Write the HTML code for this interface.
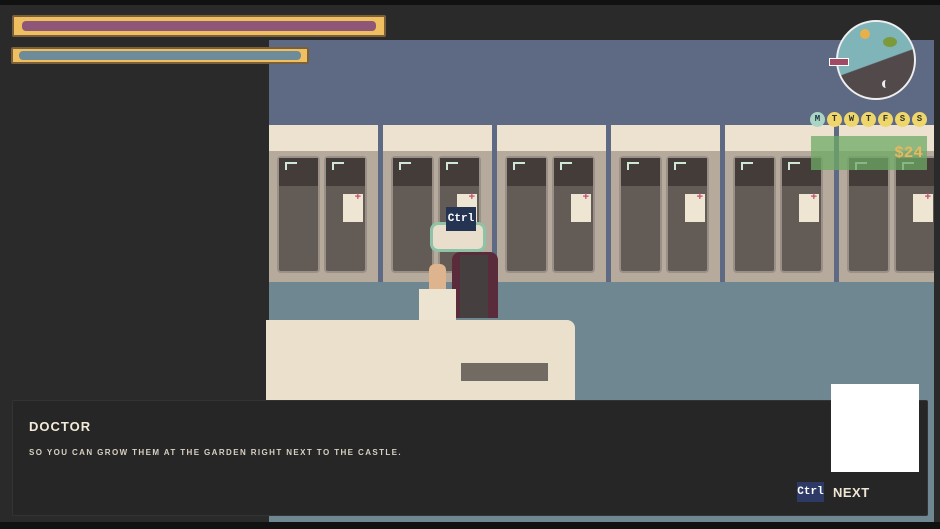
<!DOCTYPE html>
<html><head><style>
*{margin:0;padding:0;box-sizing:border-box}
body{width:940px;height:529px;background:#2b2a2b;position:relative;overflow:hidden;font-family:"Liberation Sans",sans-serif}
.a{position:absolute}
.cab{position:absolute;top:85px;width:109px;height:157px;background:#b5aa9c}
.cab .top{position:absolute;left:0;top:0;width:109px;height:26px;background:#ece2cf}
.cab .d{position:absolute;top:31px;width:43px;height:117px;background:#635b56;border:2px solid #9b9088;border-radius:4px}
.cab .d::before{content:"";position:absolute;left:0;top:0;right:0;height:28px;background:#433c39}
.cab .d::after{content:"";position:absolute;left:6px;top:4px;width:10px;height:6px;border-left:2px solid #cfe8d6;border-top:2px solid #cfe8d6}
.cab .l{left:8px}.cab .r{left:55px}
.note{position:absolute;left:74px;top:69px;width:20px;height:28px;background:#efe5d3}
.note::before{content:"+";position:absolute;right:2px;top:-3px;color:#c2506e;font-size:11px;font-weight:bold}
</style></head><body>
<div class="a" style="left:0;top:0;width:940px;height:5px;background:#111"></div>
<div class="a" style="left:269px;top:40px;width:665px;height:482px;background:#5e6983;overflow:hidden">
<div class="a" style="left:0;top:242px;width:665px;height:240px;background:#6f8791"></div>
<div class="cab" style="left:0px"><div class="top"></div><div class="d l"></div><div class="d r"></div><div class="note"></div></div>
<div class="cab" style="left:114px"><div class="top"></div><div class="d l"></div><div class="d r"></div><div class="note"></div></div>
<div class="cab" style="left:228px"><div class="top"></div><div class="d l"></div><div class="d r"></div><div class="note"></div></div>
<div class="cab" style="left:342px"><div class="top"></div><div class="d l"></div><div class="d r"></div><div class="note"></div></div>
<div class="cab" style="left:456px"><div class="top"></div><div class="d l"></div><div class="d r"></div><div class="note"></div></div>
<div class="cab" style="left:570px"><div class="top"></div><div class="d l"></div><div class="d r"></div><div class="note"></div></div>
</div>
<!-- characters -->
<div class="a" style="left:452px;top:252px;width:46px;height:66px;background:#5a2b3a;border-radius:8px 8px 0 0"></div>
<div class="a" style="left:460px;top:255px;width:28px;height:63px;background:#45403f"></div>
<div class="a" style="left:430px;top:222px;width:56px;height:30px;background:#e9decb;border:3px solid #8fc3a8;border-radius:8px"></div>
<div class="a" style="left:446px;top:207px;width:30px;height:24px;background:#263454;color:#fff;font:bold 11px 'Liberation Mono',monospace;text-align:center;line-height:24px">Ctrl</div>
<div class="a" style="left:429px;top:264px;width:17px;height:26px;background:#deb48e;border-radius:6px 6px 0 0"></div>
<div class="a" style="left:419px;top:289px;width:37px;height:31px;background:#ede3d1"></div>
<!-- counter -->
<div class="a" style="left:266px;top:320px;width:309px;height:80px;background:#ebe0cb;border-radius:0 8px 0 0"></div>
<div class="a" style="left:461px;top:363px;width:87px;height:18px;background:#726b63"></div>
<!-- bars -->
<div class="a" style="left:12px;top:15px;width:374px;height:22px;background:#f0c060;border:2px solid #7a5f3a;border-radius:2px"></div>
<div class="a" style="left:22px;top:21px;width:354px;height:10px;background:#8e5677;border-radius:4px"></div>
<div class="a" style="left:11px;top:47px;width:298px;height:17px;background:#f0c060;border:2px solid #7a5f3a;border-radius:2px"></div>
<div class="a" style="left:19px;top:51px;width:282px;height:9px;background:#6e8b99;border-radius:4px"></div>
<!-- clock -->
<div class="a" style="left:836px;top:20px;width:80px;height:80px;border-radius:50%;background:linear-gradient(160deg,#7fb4b8 0%,#7fb4b8 52%,#524a4a 53%,#524a4a 100%);border:2px solid #eee;overflow:hidden">
<div class="a" style="left:22px;top:7px;width:10px;height:10px;border-radius:50%;background:#e8b04a"></div>
<div class="a" style="left:45px;top:15px;width:14px;height:10px;background:#7c9a3a;border-radius:50%"></div>
<div class="a" style="left:44px;top:58px;width:8px;height:8px;border-radius:50%;border-left:3px solid #eee"></div>
</div>
<div class="a" style="left:829px;top:58px;width:20px;height:8px;background:#a04a66;border:1px solid #fff"></div>
<div class="a" style="left:810px;top:112px;height:16px;display:flex;gap:2px">
<span style="width:15px;height:15px;border-radius:50%;background:#a9d6c4;font:bold 9px 'Liberation Mono';text-align:center;line-height:15px;color:#234">M</span>
<span style="width:15px;height:15px;border-radius:50%;background:#eed66a;font:bold 9px 'Liberation Mono';text-align:center;line-height:15px;color:#333">T</span>
<span style="width:15px;height:15px;border-radius:50%;background:#eed66a;font:bold 9px 'Liberation Mono';text-align:center;line-height:15px;color:#333">W</span>
<span style="width:15px;height:15px;border-radius:50%;background:#eed66a;font:bold 9px 'Liberation Mono';text-align:center;line-height:15px;color:#333">T</span>
<span style="width:15px;height:15px;border-radius:50%;background:#eed66a;font:bold 9px 'Liberation Mono';text-align:center;line-height:15px;color:#333">F</span>
<span style="width:15px;height:15px;border-radius:50%;background:#eed66a;font:bold 9px 'Liberation Mono';text-align:center;line-height:15px;color:#333">S</span>
<span style="width:15px;height:15px;border-radius:50%;background:#eed66a;font:bold 9px 'Liberation Mono';text-align:center;line-height:15px;color:#333">S</span>
</div>
<div class="a" style="left:811px;top:136px;width:116px;height:34px;background:rgba(110,170,100,.75);color:#e8b860;font:bold 16px 'Liberation Mono',monospace;text-align:right;padding:8px 4px 0 0">$24</div>
<!-- dialog -->
<div class="a" style="left:12px;top:400px;width:916px;height:116px;background:#262626;border:1px solid #333;border-radius:2px"></div>
<div class="a" style="left:29px;top:419px;color:#f3ead8;font:bold 13px 'Liberation Sans',sans-serif;letter-spacing:1px">DOCTOR</div>
<div class="a" style="left:29px;top:448px;color:#d8d0c2;font:bold 8px 'Liberation Sans',sans-serif;letter-spacing:1.4px">SO YOU CAN GROW THEM AT THE GARDEN RIGHT NEXT TO THE CASTLE.</div>
<div class="a" style="left:831px;top:384px;width:88px;height:88px;background:#fff"></div>
<div class="a" style="left:797px;top:482px;width:27px;height:20px;background:#2d3a66;color:#fff;font:bold 11px 'Liberation Mono',monospace;text-align:center;line-height:20px">Ctrl</div>
<div class="a" style="left:833px;top:485px;color:#efe6d3;font:bold 13px 'Liberation Sans',sans-serif;letter-spacing:.5px">NEXT</div>
<div class="a" style="left:0;top:522px;width:940px;height:7px;background:#111"></div>
</body></html>
